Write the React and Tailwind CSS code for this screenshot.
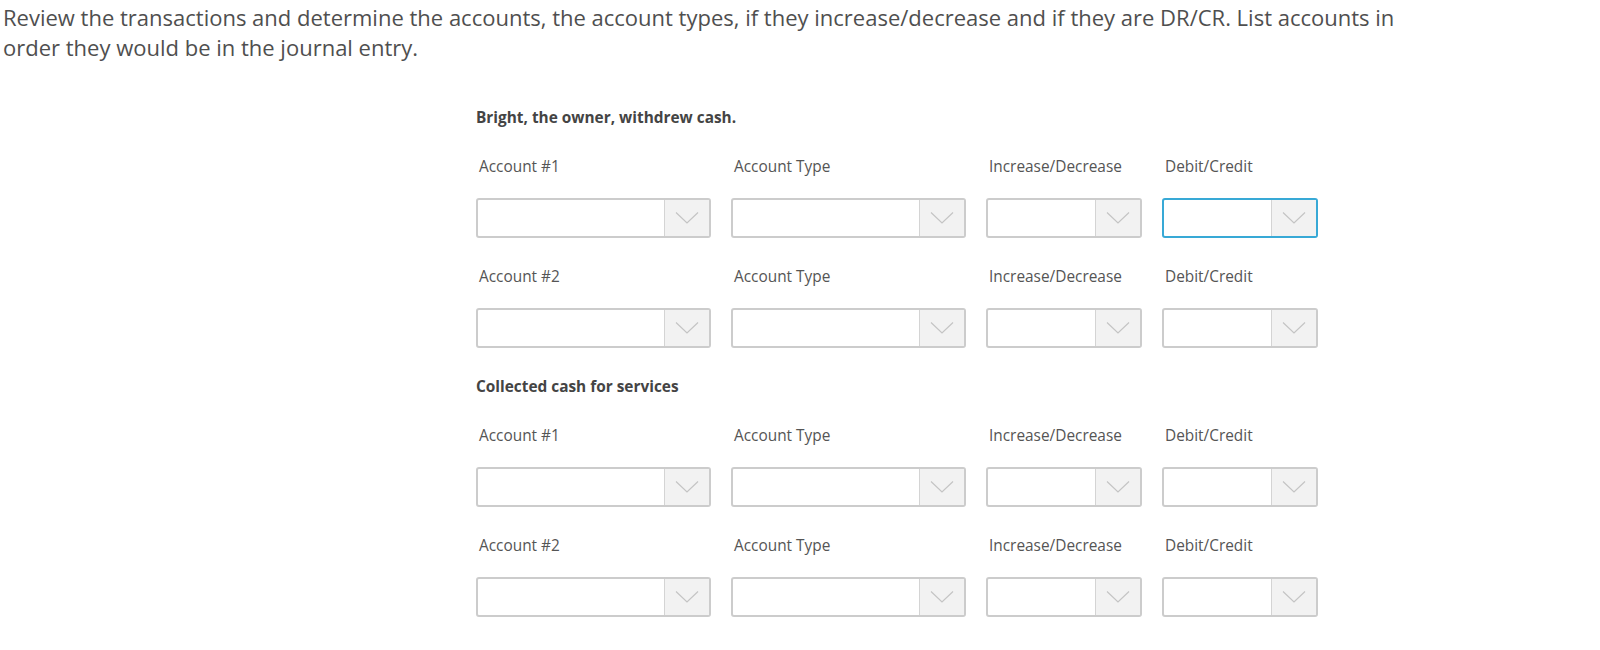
import React from 'react';

const font = { fontFamily: '"Open Sans", "Liberation Sans", sans-serif' };

function Chevron() {
  return (
    <svg width="24" height="14" viewBox="0 0 24 14" fill="none">
      <path d="M1 1.5 L12 12 L23 1.5" stroke="#c4c4c4" strokeWidth="1.2" />
    </svg>
  );
}

function Select({ width, focused }) {
  return (
    <div
      className={`flex h-[40px] rounded-[3px] border-2 bg-white ${
        focused ? 'border-[#38a9d6]' : 'border-[#cccccc]'
      } ${width}`}
    >
      <div className="flex-1" />
      <div className="w-[45px] flex items-center justify-center bg-[#f2f2f2] border-l border-[#d4d4d4]">
        <Chevron />
      </div>
    </div>
  );
}

const cols = [
  { label: 'Account', width: 'w-[235px]' },
  { label: 'Account Type', width: 'w-[235px]' },
  { label: 'Increase/Decrease', width: 'w-[156px]' },
  { label: 'Debit/Credit', width: 'w-[156px]' },
];

function EntryRow({ n, focusLast }) {
  return (
    <div className="flex gap-[20px]">
      {cols.map((c, i) => (
        <div key={i} className={c.width}>
          <div className="h-[20px] leading-[20px] pl-[3px] text-[15.4px] text-[#555555] whitespace-nowrap">
            {i === 0 ? `Account #${n}` : c.label}
          </div>
          <div className="mt-[21px]">
            <Select width={c.width} focused={focusLast && i === 3} />
          </div>
        </div>
      ))}
    </div>
  );
}

function Transaction({ title, focusFirst }) {
  return (
    <div className="flex flex-col gap-[29px]">
      <div className="h-[20px] leading-[20px] text-[15.4px] font-bold text-[#444444]">{title}</div>
      <EntryRow n={1} focusLast={focusFirst} />
      <EntryRow n={2} />
    </div>
  );
}

export default function App() {
  return (
    <div className="min-h-screen bg-white" style={font}>
      <p className="pt-[2px] pl-[3px] text-[22px] leading-[30px] text-[#4f4f4f] max-w-[1420px]">
        Review the transactions and determine the accounts, the account types, if they increase/decrease and if they are DR/CR. List accounts in order they would be in the journal entry.
      </p>
      <div className="pl-[476px] pt-[46px] flex flex-col gap-[29px]">
        <Transaction title="Bright, the owner, withdrew cash." focusFirst />
        <Transaction title="Collected cash for services" />
      </div>
    </div>
  );
}
